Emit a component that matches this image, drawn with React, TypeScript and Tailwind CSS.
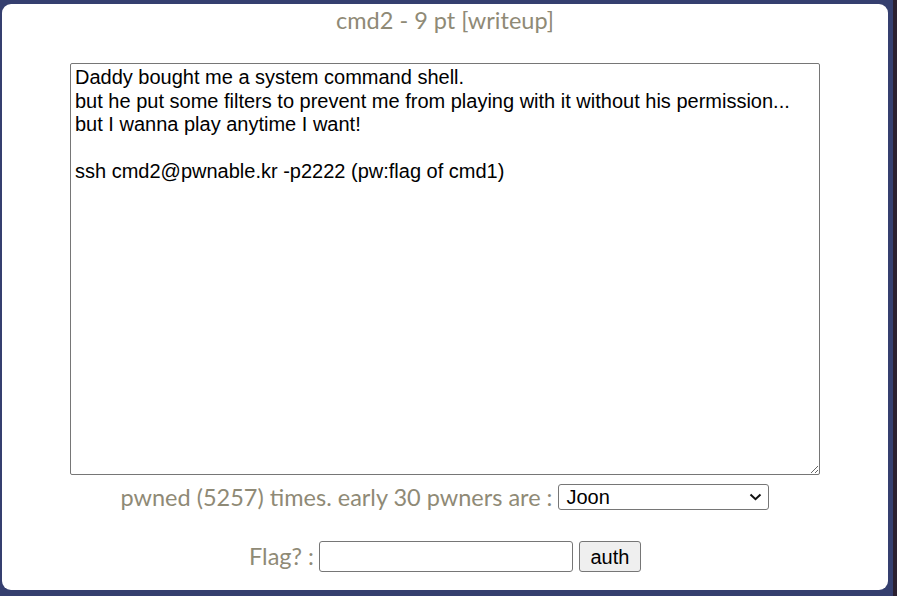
import React from "react";

const desc = `Daddy bought me a system command shell.
but he put some filters to prevent me from playing with it without his permission...
but I wanna play anytime I want!

ssh cmd2@pwnable.kr -p2222 (pw:flag of cmd1)`;

export default function App() {
  return (
    <div className="h-screen w-full bg-[#353f6f] border-r-4 border-[#2b2030] pl-[2px] pt-[4px] pr-[5px] pb-[6px] overflow-hidden">
      <div className="h-full w-full bg-white rounded-[9px] flex flex-col items-center font-['Lato',sans-serif] text-[#8f8a76]">
        <div className="mt-[1px] text-[23.5px] leading-[30px]">cmd2 - 9 pt [writeup]</div>
        <textarea
          readOnly
          defaultValue={desc}
          className="mt-[28px] w-[750px] h-[412px] shrink-0 border border-[#767676] rounded-[2px] px-[4px] py-[2px] font-['Liberation_Sans',Arial,sans-serif] text-[20px] leading-[23.5px] text-black outline-none resize"
        />
        <div className="mt-[9px] flex items-center h-[26px] gap-[6px]">
          <span className="text-[23.5px] leading-[26px]">pwned (5257) times. early 30 pwners are :</span>
          <div className="relative w-[211px] h-[26px] border border-[#767676] rounded-[3px] bg-white">
            <span className="absolute left-[7px] top-0 leading-[24px] font-['Liberation_Sans',Arial,sans-serif] text-[20px] text-black">Joon</span>
            <svg className="absolute right-[6px] top-[8px]" width="13" height="8" viewBox="0 0 13 8">
              <path d="M1.5 1.5 L6.5 6.2 L11.5 1.5" fill="none" stroke="#111" strokeWidth="2" />
            </svg>
          </div>
        </div>
        <div className="mt-[31px] flex items-center gap-[5px]">
          <span className="text-[23.5px] leading-[31px]">Flag? :</span>
          <input className="w-[254px] h-[31px] border border-[#767676] rounded-[3px] outline-none" />
          <button className="ml-[1px] w-[62px] h-[31px] bg-[#efefef] border border-[#767676] rounded-[3px] font-['Liberation_Sans',Arial,sans-serif] text-[20px] text-black">
            auth
          </button>
        </div>
      </div>
    </div>
  );
}
